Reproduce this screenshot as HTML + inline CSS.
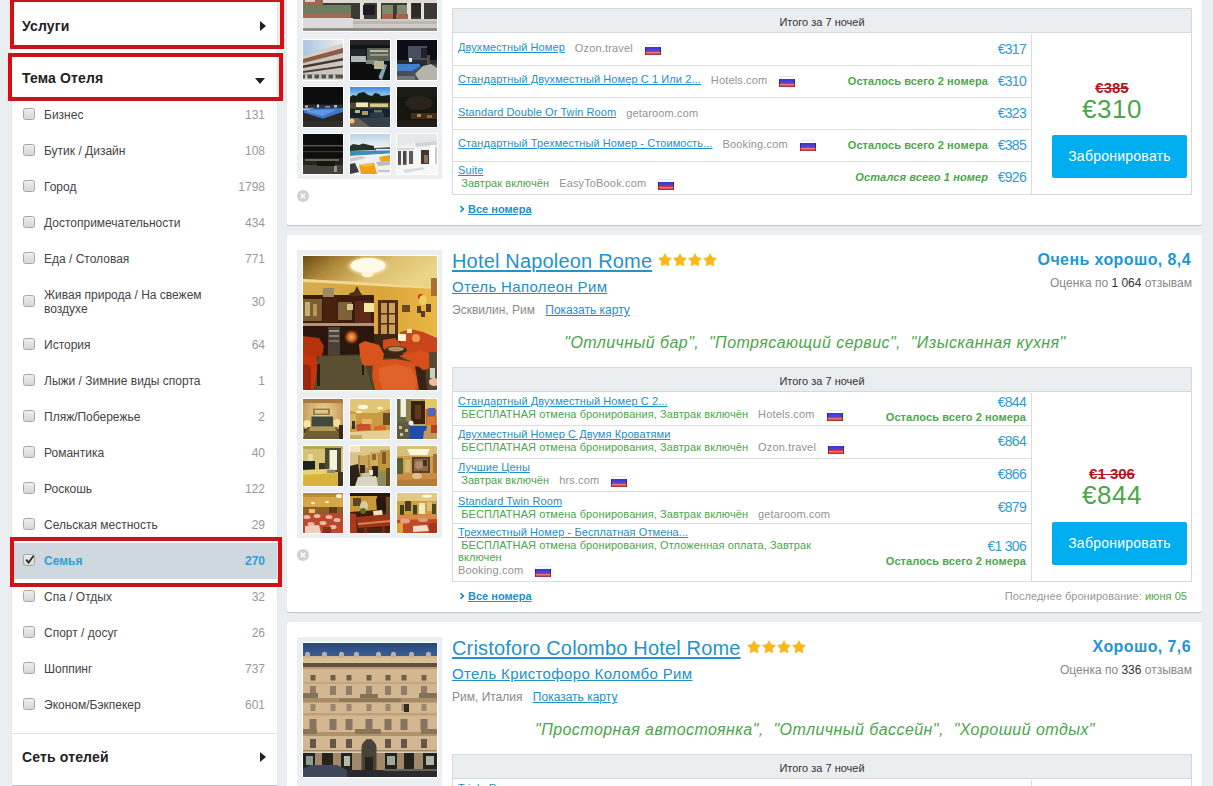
<!DOCTYPE html>
<html lang="ru"><head><meta charset="utf-8"><title>Отели</title>
<style>
*{box-sizing:border-box;margin:0;padding:0}
html,body{width:1213px;height:786px;overflow:hidden}
body{background:#ebeef1;font-family:"Liberation Sans",sans-serif;font-size:12px;color:#444;position:relative}
a{color:#2390c6;text-decoration:underline}
.abs{position:absolute}
#side{position:absolute;left:12px;top:0;width:265px;height:785px;background:#fff;box-shadow:0 1px 1px rgba(0,0,0,.18)}
.sh{position:absolute;left:10px;font-size:14px;font-weight:bold;color:#222;line-height:16px;white-space:nowrap;letter-spacing:.15px}
.row{position:absolute;left:0;width:265px;height:36px}
.row.sel{background:#cfd7df}
.cb{position:absolute;left:11px;top:11px;width:12px;height:12px;border:1px solid #a8a8a8;border-radius:2.5px;background:linear-gradient(#eeeeee,#d6d6d6)}
.row .t{position:absolute;left:32px;top:11px;line-height:14px;font-size:12px;color:#444;width:170px}
.row .n{position:absolute;right:12px;top:11px;line-height:14px;font-size:12px;color:#999;text-align:right}
.row.sel .t,.row.sel .n{color:#2ea0db;font-weight:bold}
.red{position:absolute;border:4px solid #e0090c;border-top-color:#c9151a;border-bottom-color:#c9151a}
.card{position:absolute;left:287px;width:915px;background:#fff;border-radius:2px;box-shadow:0 1px 1px rgba(0,0,0,.18)}
.panel{position:absolute;left:10px;top:15px;width:145px;height:288px;background:#ebeff2}
.img{position:absolute;overflow:hidden;box-shadow:0 0 0 1px #fff}
.img svg{display:block}
.x{position:absolute;left:10px;top:314px;width:12px;height:12px;border-radius:6px;background:#ccd1d5}
.title{position:absolute;left:165px;top:14px;font-size:20px;line-height:24px;white-space:nowrap}
.title a{letter-spacing:.18px;text-decoration-thickness:2px;text-underline-offset:2px;color:#2592cc}
.sub{position:absolute;left:165px;top:43px;font-size:15px;line-height:18px;white-space:nowrap;letter-spacing:.36px}
.loc{position:absolute;left:165px;top:68px;font-size:12px;line-height:14px;color:#8a8a8a;white-space:nowrap}
.loc a{margin-left:7px}
.q{position:absolute;left:165px;width:726px;top:98px;text-align:center;font-size:16px;line-height:20px;font-style:italic;color:#4ba64b;white-space:pre;letter-spacing:.45px}
.rate{position:absolute;right:11px;top:15px;font-size:16px;line-height:20px;font-weight:bold;color:#2196d3;white-space:nowrap;letter-spacing:.4px}
.rev{position:absolute;right:10px;top:41px;font-size:12px;line-height:14px;color:#888;white-space:nowrap}
.rev b{font-weight:normal;color:#333}
.tbl{position:absolute;left:165px;top:132px;width:740px;border:1px solid #d3d8dc;background:#fff}
.th{position:absolute;left:0;top:0;width:738px;height:24px;background:#ebeef1;border-bottom:1px solid #d3d8dc;text-align:center;font-size:11px;line-height:26px;color:#333}
.tr{position:absolute;left:0;width:578px;border-bottom:1px solid #d9dde0;font-size:11px;line-height:13px;letter-spacing:.09px}
.tr a{position:absolute;left:5px;white-space:nowrap}
.tr .g{color:#4ba64b}
.tr a.in{position:static}
.tr .pv{color:#929292;margin-left:10px;letter-spacing:.15px;position:relative;top:0}
.tr .one .pv{top:1px}
.tr .one .fl{vertical-align:-4px}
.tr .l2{position:absolute;left:5px;white-space:nowrap}
.fl{display:inline-block;width:16px;height:11px;margin-left:12px;vertical-align:-3px}
.pr{position:absolute;right:5px;font-size:14px;line-height:15px;color:#2f9ad2;white-space:nowrap;letter-spacing:-.7px}
.lf{position:absolute;right:5px;font-size:11px;line-height:13px;font-weight:bold;color:#4ba64b;white-space:nowrap;letter-spacing:.1px}
.rc{position:absolute;left:578px;top:25px;width:160px;border-left:1px solid #d9dde0}
.old{position:absolute;left:1px;width:158px;text-align:center;font-size:15px;line-height:16px;font-weight:bold;color:#b3151c;text-decoration:line-through}
.big{position:absolute;left:1px;width:158px;text-align:center;font-size:26px;line-height:28px;color:#4ba64b;letter-spacing:.5px}
.btn{position:absolute;left:20px;width:135px;height:43px;background:#00adee;border-radius:2px;color:#fff;font-size:14px;line-height:43px;text-align:center;letter-spacing:.25px}
.all{position:absolute;left:171px;font-size:11px;line-height:13px;font-weight:bold;white-space:nowrap}
.all:before{content:"";position:absolute;left:0px;top:3px;width:4px;height:4px;border-right:2px solid #2390c6;border-top:2px solid #2390c6;transform:rotate(45deg) scale(.8)}
.all a{margin-left:10px}
.last{position:absolute;right:15px;font-size:11px;line-height:13px;color:#999;white-space:nowrap;letter-spacing:.05px}
.last span{color:#4ba64b}
.stars{display:inline-block;vertical-align:1px;margin-left:6px;font-size:0}
.stars svg{margin-right:1px}
</style></head>
<body>
<div id="side">
<div class="sh" style="top:18px">Услуги</div>
<div class="abs" style="left:248px;top:21px;width:0;height:0;border-left:6px solid #222;border-top:5px solid transparent;border-bottom:5px solid transparent"></div>
<div class="sh" style="top:70px">Тема Отеля</div>
<div class="abs" style="left:243px;top:78px;width:0;height:0;border-top:6px solid #222;border-left:5px solid transparent;border-right:5px solid transparent"></div>
<div class="row" style="top:97px;height:36px"><span class="cb" style="top:11px"></span><span class="t">Бизнес</span><span class="n" style="top:11px">131</span></div>
<div class="row" style="top:133px;height:36px"><span class="cb" style="top:11px"></span><span class="t">Бутик / Дизайн</span><span class="n" style="top:11px">108</span></div>
<div class="row" style="top:169px;height:36px"><span class="cb" style="top:11px"></span><span class="t">Город</span><span class="n" style="top:11px">1798</span></div>
<div class="row" style="top:205px;height:36px"><span class="cb" style="top:11px"></span><span class="t">Достопримечательности</span><span class="n" style="top:11px">434</span></div>
<div class="row" style="top:241px;height:36px"><span class="cb" style="top:11px"></span><span class="t">Еда / Столовая</span><span class="n" style="top:11px">771</span></div>
<div class="row" style="top:277px;height:50px"><span class="cb" style="top:18px"></span><span class="t">Живая природа / На свежем воздухе</span><span class="n" style="top:18px">30</span></div>
<div class="row" style="top:327px;height:36px"><span class="cb" style="top:11px"></span><span class="t">История</span><span class="n" style="top:11px">64</span></div>
<div class="row" style="top:363px;height:36px"><span class="cb" style="top:11px"></span><span class="t">Лыжи / Зимние виды спорта</span><span class="n" style="top:11px">1</span></div>
<div class="row" style="top:399px;height:36px"><span class="cb" style="top:11px"></span><span class="t">Пляж/Побережье</span><span class="n" style="top:11px">2</span></div>
<div class="row" style="top:435px;height:36px"><span class="cb" style="top:11px"></span><span class="t">Романтика</span><span class="n" style="top:11px">40</span></div>
<div class="row" style="top:471px;height:36px"><span class="cb" style="top:11px"></span><span class="t">Роскошь</span><span class="n" style="top:11px">122</span></div>
<div class="row" style="top:507px;height:36px"><span class="cb" style="top:11px"></span><span class="t">Сельская местность</span><span class="n" style="top:11px">29</span></div>
<div class="row sel" style="top:543px;height:36px"><span class="cb" style="top:11px"><svg class="abs" style="left:0px;top:-1px" width="12" height="12" viewBox="0 0 12 12"><path d="M2.2 5.6 L4.6 8.6 L9.6 1.8" fill="none" stroke="#222" stroke-width="1.7"/></svg></span><span class="t">Семья</span><span class="n" style="top:11px">270</span></div>
<div class="row" style="top:579px;height:36px"><span class="cb" style="top:11px"></span><span class="t">Спа / Отдых</span><span class="n" style="top:11px">32</span></div>
<div class="row" style="top:615px;height:36px"><span class="cb" style="top:11px"></span><span class="t">Спорт / досуг</span><span class="n" style="top:11px">26</span></div>
<div class="row" style="top:651px;height:36px"><span class="cb" style="top:11px"></span><span class="t">Шоппинг</span><span class="n" style="top:11px">737</span></div>
<div class="row" style="top:687px;height:36px"><span class="cb" style="top:11px"></span><span class="t">Эконом/Бэкпекер</span><span class="n" style="top:11px">601</span></div>
<div class="abs" style="left:0;top:733px;width:265px;height:1px;background:#dfe3e6"></div>
<div class="sh" style="top:749px">Сеть отелей</div>
<div class="abs" style="left:248px;top:752px;width:0;height:0;border-left:6px solid #222;border-top:5px solid transparent;border-bottom:5px solid transparent"></div>
</div>
<div class="card" style="top:-124px;height:349px">
<div class="panel"></div>
<div class="img" style="left:16px;top:21px;width:134px;height:134px"><svg width="134" height="134" viewBox="0 0 134 134"><defs><filter id="g1" x="-5%" y="-5%" width="110%" height="110%"><feGaussianBlur stdDeviation="0.6"/></filter></defs><g filter="url(#g1)"><rect x="0" y="0" width="134" height="134" fill="#b8aea4"/><rect x="0" y="96" width="134" height="10" fill="#ded9d2"/><rect x="0" y="106" width="134" height="16" fill="#3c3a36"/><rect x="0" y="100" width="20" height="9" fill="#9a6a50"/><rect x="2" y="100" width="10" height="5" fill="#d8d0c4"/><rect x="0" y="108" width="48" height="8" fill="#6f7a5c"/><rect x="0" y="116" width="48" height="6" fill="#a06a56"/><rect x="57" y="105" width="4" height="20" fill="#e4e0da"/><rect x="74" y="105" width="4" height="20" fill="#e4e0da"/><rect x="104" y="105" width="4" height="20" fill="#e4e0da"/><rect x="118" y="105" width="3" height="20" fill="#e4e0da"/><rect x="79" y="108" width="11" height="9" fill="#7f8a68"/><rect x="94" y="108" width="10" height="9" fill="#7f8a68"/><rect x="79" y="117" width="11" height="6" fill="#a8644e"/><rect x="93" y="117" width="12" height="7" fill="#a8644e"/><rect x="60" y="108" width="12" height="10" fill="#1e1e20"/><rect x="109" y="106" width="9" height="14" fill="#2a2a2c"/><rect x="122" y="106" width="12" height="14" fill="#3a3836"/><rect x="0" y="122" width="134" height="12" fill="#cfcac6"/><rect x="0" y="121" width="50" height="11" fill="#dcdcdf"/><rect x="0" y="131" width="134" height="3" fill="#8f8c8a"/><rect x="50" y="124" width="84" height="3" fill="#bdb7b2"/></g></svg></div>
<div class="img" style="left:16px;top:164px;width:40px;height:40px"><svg width="40" height="40" viewBox="0 0 40 40"><defs><filter id="g3" x="-5%" y="-5%" width="110%" height="110%"><feGaussianBlur stdDeviation="0.4"/></filter></defs><g filter="url(#g3)"><defs><linearGradient id="g2" x1="0" y1="0" x2="1" y2="0"><stop offset="0" stop-color="#a9c6e4"/><stop offset="0.55" stop-color="#cfdde9"/><stop offset="1" stop-color="#eeeeea"/></linearGradient></defs><rect x="0" y="0" width="40" height="40" fill="#cfc6bb"/><polygon points="0,0 40,0 40,4 26,7 0,17" fill="url(#g2)"/><polygon points="0,17 26,7 40,4 40,8 0,21" fill="#d8d0c6"/><polygon points="0,19 40,8 40,13 0,23" fill="#8a5c48"/><polygon points="0,25.5 40,18 40,20.5 0,28" fill="#3f3933"/><polygon points="0,31 40,25.5 40,27.5 0,33" fill="#4a443e"/><rect x="0" y="34.5" width="40" height="4.5" fill="#55524e"/><rect x="2" y="34.5" width="2.5" height="4.5" fill="#c9c5c0"/><rect x="9" y="34.5" width="2.5" height="4.5" fill="#c9c5c0"/><rect x="16" y="34.5" width="2.5" height="4.5" fill="#c9c5c0"/><rect x="23" y="34.5" width="2.5" height="4.5" fill="#c9c5c0"/><rect x="30" y="34.5" width="2.5" height="4.5" fill="#c9c5c0"/><rect x="0" y="38.5" width="40" height="1.5" fill="#d8d6d2"/></g></svg></div>
<div class="img" style="left:63px;top:164px;width:40px;height:40px"><svg width="40" height="40" viewBox="0 0 40 40"><defs><filter id="g4" x="-5%" y="-5%" width="110%" height="110%"><feGaussianBlur stdDeviation="0.5"/></filter></defs><g filter="url(#g4)"><rect x="0" y="0" width="40" height="40" fill="#101216"/><rect x="0" y="0" width="40" height="5" fill="#2a2426"/><rect x="17" y="8" width="23" height="13" fill="#5d6358"/><rect x="20" y="10" width="18" height="2" fill="#b9b7a0"/><rect x="20" y="14" width="18" height="2" fill="#9a9880"/><rect x="0" y="9" width="16" height="7" fill="#24282a"/><rect x="1" y="16" width="15" height="6" fill="#aeb8b6"/><rect x="16" y="20" width="12" height="5" fill="#7c8478"/><polygon points="28,38 34,24 37,25 32,40" fill="#86a0b0"/><rect x="24" y="21" width="10" height="8" fill="#b8b49a"/><polygon points="0,24 22,24 30,40 0,40" fill="#0b0c10"/></g></svg></div>
<div class="img" style="left:110px;top:164px;width:40px;height:40px"><svg width="40" height="40" viewBox="0 0 40 40"><defs><filter id="g5" x="-5%" y="-5%" width="110%" height="110%"><feGaussianBlur stdDeviation="0.5"/></filter></defs><g filter="url(#g5)"><rect x="0" y="0" width="40" height="40" fill="#0d0e12"/><rect x="11" y="6" width="19" height="14" fill="#46505e"/><rect x="24" y="8" width="6" height="10" fill="#20242a"/><rect x="0" y="20" width="40" height="5" fill="#2a2e30"/><rect x="12" y="18" width="3" height="4" fill="#e0e4e0"/><rect x="30" y="15" width="3" height="9" fill="#50503c"/><polygon points="0,24 22,24 24,26 16,31 0,31" fill="#3c7fd0"/><polygon points="0,31 16,31 24,26 40,24 40,40 0,40" fill="#4a4e52"/><polygon points="18,34 26,26 34,24 40,28 40,40 22,40" fill="#b4b4ac"/><rect x="0" y="36" width="18" height="4" fill="#707478"/></g></svg></div>
<div class="img" style="left:16px;top:211px;width:40px;height:40px"><svg width="40" height="40" viewBox="0 0 40 40"><defs><filter id="g6" x="-5%" y="-5%" width="110%" height="110%"><feGaussianBlur stdDeviation="0.55"/></filter></defs><g filter="url(#g6)"><rect x="0" y="0" width="40" height="40" fill="#07080b"/><rect x="0" y="17.5" width="40" height="3.5" fill="#2c3036"/><rect x="2" y="18.5" width="3" height="2" fill="#c8ccd0"/><rect x="14" y="17.5" width="2" height="3" fill="#d8dce0"/><rect x="31" y="18" width="3" height="2.5" fill="#b8bcc0"/><rect x="22" y="19" width="5" height="1.5" fill="#8a9098"/><polygon points="0,21.5 40,21 40,25 20,32 1,26" fill="#3c76c6"/><polygon points="3,23 34,22.5 20,29 6,25.5" fill="#5e96de"/><polygon points="0,21.5 12,21.3 4,23 0,23" fill="#b8d0ec"/><polygon points="0,26 1,26 20,32 40,25 40,40 0,40" fill="#2b2723"/><rect x="0" y="34" width="40" height="6" fill="#332e29"/></g></svg></div>
<div class="img" style="left:63px;top:211px;width:40px;height:40px"><svg width="40" height="40" viewBox="0 0 40 40"><defs><filter id="g8" x="-5%" y="-5%" width="110%" height="110%"><feGaussianBlur stdDeviation="0.55"/></filter></defs><g filter="url(#g8)"><defs><linearGradient id="g7" x1="0" y1="0" x2="0" y2="1"><stop offset="0" stop-color="#3a8be0"/><stop offset="1" stop-color="#a4d0f0"/></linearGradient></defs><rect x="0" y="0" width="40" height="40" fill="#1b2834"/><rect x="0" y="0" width="40" height="10" fill="url(#g7)"/><polygon points="0,10 3,8 6,9 9,6 14,5 18,8 22,9 25,6 29,7 31,9 40,8 40,17 0,17" fill="#131a14"/><rect x="0" y="15.5" width="40" height="5.5" fill="#4f4a30"/><rect x="6" y="15.5" width="12" height="4.5" fill="#f2e6b4"/><rect x="20" y="16.5" width="18" height="3.5" fill="#d8c88c"/><rect x="0" y="21" width="40" height="1.2" fill="#2c3a44"/><rect x="0" y="22" width="40" height="9" fill="#16222e"/><rect x="5" y="23" width="5" height="3" fill="#c8b478"/><rect x="12" y="24" width="6" height="4" fill="#b09a60"/><rect x="24" y="23" width="8" height="2.5" fill="#6f6a50"/><rect x="20" y="26" width="14" height="4" fill="#243a52"/><polygon points="0,31 40,30 40,40 0,40" fill="#36414c"/><polygon points="0,31 8,31 20,40 0,40" fill="#6b635a"/><ellipse cx="2" cy="34" rx="2.5" ry="2.5" fill="#f0c078"/></g></svg></div>
<div class="img" style="left:110px;top:211px;width:40px;height:40px"><svg width="40" height="40" viewBox="0 0 40 40"><defs><filter id="g9" x="-5%" y="-5%" width="110%" height="110%"><feGaussianBlur stdDeviation="0.6"/></filter></defs><g filter="url(#g9)"><rect x="0" y="0" width="40" height="40" fill="#17130f"/><rect x="0" y="0" width="40" height="10" fill="#1f1a14"/><ellipse cx="22" cy="16" rx="14" ry="7" fill="#2a241a"/><rect x="14" y="26" width="26" height="6" fill="#3f2e1c"/><rect x="20" y="27" width="4" height="3" fill="#b08850"/><rect x="30" y="28" width="5" height="3" fill="#8a6a40"/><ellipse cx="18" cy="35" rx="2" ry="2" fill="#d8a868"/><rect x="0" y="33" width="40" height="7" fill="#231c16"/></g></svg></div>
<div class="img" style="left:16px;top:258px;width:40px;height:40px"><svg width="40" height="40" viewBox="0 0 40 40"><defs><filter id="g10" x="-5%" y="-5%" width="110%" height="110%"><feGaussianBlur stdDeviation="0.5"/></filter></defs><g filter="url(#g10)"><rect x="0" y="0" width="40" height="40" fill="#09090b"/><rect x="0" y="11" width="40" height="1.5" fill="#55534f"/><rect x="0" y="17" width="40" height="1.2" fill="#3a3834"/><rect x="0" y="24" width="40" height="8" fill="#25231f"/><rect x="2" y="25" width="34" height="2" fill="#6a6658"/><rect x="0" y="31" width="40" height="9" fill="#46423b"/><rect x="14" y="27" width="18" height="5" fill="#15130f"/><rect x="31" y="32" width="3" height="6" fill="#9a9484"/></g></svg></div>
<div class="img" style="left:63px;top:258px;width:40px;height:40px"><svg width="40" height="40" viewBox="0 0 40 40"><defs><filter id="g12" x="-5%" y="-5%" width="110%" height="110%"><feGaussianBlur stdDeviation="0.55"/></filter></defs><g filter="url(#g12)"><defs><linearGradient id="g11" x1="0" y1="0" x2="0" y2="1"><stop offset="0" stop-color="#b9d3e8"/><stop offset="1" stop-color="#eef3f5"/></linearGradient></defs><rect x="0" y="0" width="40" height="40" fill="#efefee"/><rect x="0" y="0" width="40" height="13" fill="url(#g11)"/><polygon points="0,12 3,10 9,11 13,9.5 19,11 24,12 24,16 0,17" fill="#26352a"/><polygon points="24,14 40,13 40,16.5 24,16.5" fill="#566068"/><rect x="26" y="15" width="14" height="2" fill="#e4e8e8"/><polygon points="0,17 40,16.5 40,19.5 0,22" fill="#3b8fb8"/><polygon points="0,22 40,19.5 40,40 0,40" fill="#f0f0ef"/><polygon points="0,24 12,22 16,24 0,28" fill="#c9ccd0"/><polygon points="0,30 5,29 9,38 0,40" fill="#3c3c3e"/><polygon points="9,31 24,29 27,40 11,40" fill="#f0a012"/><polygon points="12,30 22,29 23,32 12,33" fill="#f6bc4a"/><polygon points="29,23 40,21 40,27 31,28" fill="#efa51a"/><polygon points="26,28 40,27 40,31 28,32" fill="#b8bcc2"/><rect x="28" y="36" width="12" height="2" fill="#c4c8cc"/></g></svg></div>
<div class="img" style="left:110px;top:258px;width:40px;height:40px"><svg width="40" height="40" viewBox="0 0 40 40"><defs><filter id="g13" x="-5%" y="-5%" width="110%" height="110%"><feGaussianBlur stdDeviation="0.55"/></filter></defs><g filter="url(#g13)"><rect x="0" y="0" width="40" height="40" fill="#f1f1f1"/><polygon points="0,0 40,0 40,7 18,9 0,12" fill="#e6e7e8"/><polygon points="18,9 40,7 40,11 19,13" fill="#d2d4d6"/><rect x="0" y="14" width="18" height="2" fill="#d8dadc"/><rect x="1" y="17" width="3" height="14" fill="#55524e"/><rect x="6" y="17" width="3.5" height="14" fill="#4a4744"/><rect x="12" y="17" width="4" height="13" fill="#5e5a56"/><rect x="17" y="13" width="6" height="20" fill="#f6f6f6"/><rect x="24" y="16" width="8" height="14" fill="#3d3833"/><rect x="27" y="21" width="4" height="8" fill="#8f6f58"/><rect x="33" y="11" width="5" height="22" fill="#ffffff"/><rect x="38" y="13" width="2" height="20" fill="#c8cacc"/><polygon points="0,31 40,30 40,40 0,40" fill="#f7f7f7"/><polygon points="6,36 26,33 28,35 8,39" fill="#d9dbdd"/></g></svg></div>
<div class="x"><svg class="abs" style="left:0;top:0" width="12" height="12" viewBox="0 0 12 12"><path d="M3.8 3.8L8.2 8.2M8.2 3.8L3.8 8.2" stroke="#fff" stroke-width="1.6"/></svg></div>
<div class="tbl" style="height:187px">
<div class="th">Итого за 7 ночей</div>
<div class="tr" style="top:25px;height:32px"><span class="l2 one" style="top:7px"><a class="in">Двухместный Номер</a><span class="pv">Ozon.travel</span><svg class="fl" viewBox="0 0 16 11"><rect width="16" height="3" fill="#fbfbfe"/><rect y="0" width="16" height=".7" fill="#e2e3ee"/><rect y="3" width="16" height="2" fill="#3a3ed4"/><rect y="5" width="16" height="2" fill="#5b3ec4"/><rect y="7" width="16" height="1.5" fill="#d23650"/><rect y="8.5" width="16" height="1.7" fill="#f04a4a"/><rect y="10.2" width="16" height=".8" fill="#8c1616"/><rect x="0" y="3" width=".8" height="4" fill="#1b0f7a" opacity=".8"/><rect x="15.2" y="3" width=".8" height="4" fill="#1b0f7a" opacity=".8"/><rect x="0" y="7" width=".8" height="4" fill="#7a1018" opacity=".8"/><rect x="15.2" y="7" width=".8" height="4" fill="#7a1018" opacity=".8"/></svg></span><span class="pr" style="top:8px">€317</span></div>
<div class="tr" style="top:57px;height:32px"><span class="l2 one" style="top:7px"><a class="in">Стандартный Двухместный Номер С 1 Или 2...</a><span class="pv">Hotels.com</span><svg class="fl" viewBox="0 0 16 11"><rect width="16" height="3" fill="#fbfbfe"/><rect y="0" width="16" height=".7" fill="#e2e3ee"/><rect y="3" width="16" height="2" fill="#3a3ed4"/><rect y="5" width="16" height="2" fill="#5b3ec4"/><rect y="7" width="16" height="1.5" fill="#d23650"/><rect y="8.5" width="16" height="1.7" fill="#f04a4a"/><rect y="10.2" width="16" height=".8" fill="#8c1616"/><rect x="0" y="3" width=".8" height="4" fill="#1b0f7a" opacity=".8"/><rect x="15.2" y="3" width=".8" height="4" fill="#1b0f7a" opacity=".8"/><rect x="0" y="7" width=".8" height="4" fill="#7a1018" opacity=".8"/><rect x="15.2" y="7" width=".8" height="4" fill="#7a1018" opacity=".8"/></svg></span><span class="pr" style="top:8px">€310</span><span class="lf" style="top:9px;right:43px">Осталось всего 2 номера</span></div>
<div class="tr" style="top:89px;height:32px"><span class="l2 one" style="top:8px"><a class="in">Standard Double Or Twin Room</a><span class="pv">getaroom.com</span></span><span class="pr" style="top:8px">€323</span></div>
<div class="tr" style="top:121px;height:32px"><span class="l2 one" style="top:7px"><a class="in">Стандартный Трехместный Номер - Стоимость...</a><span class="pv">Booking.com</span><svg class="fl" viewBox="0 0 16 11"><rect width="16" height="3" fill="#fbfbfe"/><rect y="0" width="16" height=".7" fill="#e2e3ee"/><rect y="3" width="16" height="2" fill="#3a3ed4"/><rect y="5" width="16" height="2" fill="#5b3ec4"/><rect y="7" width="16" height="1.5" fill="#d23650"/><rect y="8.5" width="16" height="1.7" fill="#f04a4a"/><rect y="10.2" width="16" height=".8" fill="#8c1616"/><rect x="0" y="3" width=".8" height="4" fill="#1b0f7a" opacity=".8"/><rect x="15.2" y="3" width=".8" height="4" fill="#1b0f7a" opacity=".8"/><rect x="0" y="7" width=".8" height="4" fill="#7a1018" opacity=".8"/><rect x="15.2" y="7" width=".8" height="4" fill="#7a1018" opacity=".8"/></svg></span><span class="pr" style="top:8px">€385</span><span class="lf" style="top:9px;right:43px">Осталось всего 2 номера</span></div>
<div class="tr" style="top:153px;height:33px"><a style="top:2px">Suite</a><span class="l2" style="top:15px"><span class="g">&nbsp;Завтрак включён</span><span class="pv">EasyToBook.com</span><svg class="fl" viewBox="0 0 16 11"><rect width="16" height="3" fill="#fbfbfe"/><rect y="0" width="16" height=".7" fill="#e2e3ee"/><rect y="3" width="16" height="2" fill="#3a3ed4"/><rect y="5" width="16" height="2" fill="#5b3ec4"/><rect y="7" width="16" height="1.5" fill="#d23650"/><rect y="8.5" width="16" height="1.7" fill="#f04a4a"/><rect y="10.2" width="16" height=".8" fill="#8c1616"/><rect x="0" y="3" width=".8" height="4" fill="#1b0f7a" opacity=".8"/><rect x="15.2" y="3" width=".8" height="4" fill="#1b0f7a" opacity=".8"/><rect x="0" y="7" width=".8" height="4" fill="#7a1018" opacity=".8"/><rect x="15.2" y="7" width=".8" height="4" fill="#7a1018" opacity=".8"/></svg></span><span class="pr" style="top:8px">€926</span><span class="lf" style="top:9px;right:43px;font-style:italic">Остался всего 1 номер</span></div>
<div class="rc" style="height:160px"><div class="old" style="top:46px">€385</div><div class="big" style="top:61px">€310</div><div class="btn" style="top:101px">Забронировать</div></div>
</div>
<div class="all" style="top:327px"><a>Все номера</a></div>
</div>
<div class="card" style="top:235px;height:377px">
<div class="panel"></div>
<div class="img" style="left:16px;top:21px;width:134px;height:134px"><svg width="134" height="134" viewBox="0 0 134 134"><defs><filter id="g18" x="-5%" y="-5%" width="110%" height="110%"><feGaussianBlur stdDeviation="0.7"/></filter></defs><g filter="url(#g18)"><defs><linearGradient id="g14" x1="0" y1="0" x2="1" y2="0.3"><stop offset="0" stop-color="#6a4a18"/><stop offset="0.3" stop-color="#b08a3c"/><stop offset="0.65" stop-color="#dcc070"/><stop offset="1" stop-color="#ead488"/></linearGradient><linearGradient id="g15" x1="0" y1="0" x2="1" y2="0"><stop offset="0" stop-color="#d6ac4c"/><stop offset="0.6" stop-color="#dba53a"/><stop offset="1" stop-color="#e9b845"/></linearGradient><radialGradient id="g16" cx="0.5" cy="0.5" r="0.5"><stop offset="0" stop-color="#fffdf0" stop-opacity="1"/><stop offset="0.6" stop-color="#fff0c0" stop-opacity="1"/><stop offset="1" stop-color="#f0d080" stop-opacity="0"/></radialGradient><radialGradient id="g17" cx="0.5" cy="0.5" r="0.5"><stop offset="0" stop-color="#ffb060" stop-opacity="1"/><stop offset="0.5" stop-color="#e07028" stop-opacity="0.9"/><stop offset="1" stop-color="#803010" stop-opacity="0"/></radialGradient></defs><rect x="0" y="0" width="134" height="134" fill="url(#g15)"/><polygon points="0,0 134,0 134,30 90,28 40,25 0,23" fill="url(#g14)"/><polygon points="0,23 40,25 90,28 134,30 134,33 90,31 40,28 0,26" fill="#f0d890"/><ellipse cx="65" cy="10" rx="23" ry="11" fill="url(#g16)"/><ellipse cx="65" cy="9.5" rx="17.5" ry="7.5" fill="#fffbe8"/><ellipse cx="64.5" cy="18.5" rx="6" ry="3" fill="#fff6d8"/><rect x="0" y="39" width="71" height="30" fill="#3b1b0c"/><rect x="0" y="43" width="19" height="22" fill="#7a5c34"/><rect x="2" y="46" width="5" height="14" fill="#c8b070"/><rect x="10" y="48" width="4" height="12" fill="#b89858"/><rect x="20" y="42" width="14" height="24" fill="#4a2210"/><rect x="35" y="46" width="14" height="18" fill="#806038"/><rect x="44" y="48" width="6" height="6" fill="#d8c890"/><rect x="52" y="45" width="16" height="22" fill="#5a2c14"/><rect x="61" y="47" width="10" height="9" fill="#f6e6a0"/><rect x="20" y="32" width="11" height="9" fill="#9a8a68"/><polygon points="45,40 60,40 57,36 54,30 51,36 47,37" fill="#4a3018"/><rect x="0" y="67" width="71" height="3" fill="#b49274"/><rect x="0" y="70" width="71" height="32" fill="#29130b"/><ellipse cx="48.5" cy="81" rx="8" ry="8" fill="url(#g17)"/><rect x="25" y="71" width="12" height="28" fill="#4a4038"/><rect x="26" y="74" width="10" height="2" fill="#9a8e80"/><rect x="26" y="79" width="10" height="2" fill="#8a7e70"/><rect x="26" y="84" width="10" height="2" fill="#7a6e60"/><rect x="75" y="44" width="20" height="37" fill="#5a2a10"/><rect x="78" y="47" width="6" height="31" fill="#c09a58"/><rect x="86" y="47" width="6" height="31" fill="#c8a260"/><rect x="78" y="57" width="14" height="1.5" fill="#5a2a10"/><rect x="78" y="67" width="14" height="1.5" fill="#5a2a10"/><rect x="99" y="49" width="8" height="7" fill="#6a4a2a"/><rect x="114" y="50" width="4" height="7" fill="#5a3a20"/><rect x="123" y="48" width="5" height="8" fill="#5a3a20"/><rect x="118" y="55" width="4" height="6" fill="#5a3a20"/><ellipse cx="118" cy="41" rx="3" ry="3" fill="#d82a18"/><ellipse cx="120" cy="44" rx="4" ry="5" fill="#f0d060"/><rect x="128" y="22" width="6" height="18" fill="#a8702c"/><polygon points="0,100 71,98 134,100 134,134 0,134" fill="#4c4325"/><polygon points="16,100 60,100 70,134 12,134" fill="#5a5030"/><rect x="71" y="78" width="30" height="24" fill="#3a2614"/><polygon points="0,80 16,82 21,90 19,100 0,102" fill="#b6300f"/><polygon points="0,98 13,100 15,108 11,134 0,134" fill="#c4340f"/><polygon points="0,108 8,110 8,134 0,134" fill="#9e260c"/><rect x="14" y="108" width="3" height="22" fill="#2a1a10"/><polygon points="56,88 62,85 76,89 81,98 79,109 60,110 57,100" fill="#d9521c"/><rect x="59" y="109" width="2" height="10" fill="#2a1a10"/><rect x="77" y="108" width="2" height="9" fill="#2a1a10"/><polygon points="97,76 108,73 120,76 134,82 134,104 112,106 98,96" fill="#c9451a"/><ellipse cx="113" cy="82" rx="4" ry="4" fill="#f09a50"/><polygon points="80,84 92,82 98,88 96,96 84,96 80,92" fill="#d24c1a"/><ellipse cx="93" cy="94" rx="11" ry="4" fill="#3b2a1a"/><ellipse cx="93" cy="93" rx="8" ry="2.5" fill="#a89060"/><rect x="95" y="78" width="8" height="7" fill="#fff4d0"/><rect x="104" y="73" width="5" height="4" fill="#ffe8b0"/><polygon points="70,108 76,104 92,103 110,106 120,112 122,134 72,134 69,120" fill="#d6521c"/><polygon points="76,112 92,108 108,112 114,124 112,134 80,134 76,124" fill="#e06226"/><polygon points="112,110 122,112 124,134 116,134" fill="#3a2414"/><polygon points="96,100 118,94 128,98 128,112 120,114 110,106" fill="#d8501c"/><rect x="126" y="96" width="8" height="38" fill="#5a4a30"/><rect x="127" y="112" width="5" height="10" fill="#c8d0c0"/><ellipse cx="131" cy="126" rx="5" ry="4" fill="#e8c0a0"/></g></svg></div>
<div class="img" style="left:16px;top:164px;width:40px;height:40px"><svg width="40" height="40" viewBox="0 0 40 40"><defs><filter id="g20" x="-5%" y="-5%" width="110%" height="110%"><feGaussianBlur stdDeviation="0.5"/></filter></defs><g filter="url(#g20)"><defs><radialGradient id="g19" cx="0.5" cy="0.35" r="0.6"><stop offset="0" stop-color="#f0d8a0" stop-opacity="1"/><stop offset="1" stop-color="#c0924e" stop-opacity="1"/></radialGradient></defs><rect x="0" y="0" width="40" height="40" fill="url(#g19)"/><rect x="0" y="0" width="40" height="4" fill="#a87a40"/><rect x="10" y="9.5" width="17" height="6.5" fill="#9a7a40"/><rect x="12" y="11" width="13" height="3.5" fill="#d8c890"/><rect x="8.5" y="17.5" width="21.5" height="10" fill="#3f4a3a"/><ellipse cx="4" cy="25" rx="3.5" ry="4" fill="#fbe6a8"/><ellipse cx="34" cy="24" rx="3.5" ry="4" fill="#f6dc98"/><rect x="1" y="30" width="8" height="4" fill="#4a2c18"/><rect x="31" y="30" width="8" height="4" fill="#4a2c18"/><polygon points="4,28 34,28 38,40 0,40" fill="#6f5e32"/><polygon points="7,28 32,28 33,32 6,32" fill="#b09a58"/><rect x="36" y="26" width="4" height="14" fill="#3a2816"/></g></svg></div>
<div class="img" style="left:63px;top:164px;width:40px;height:40px"><svg width="40" height="40" viewBox="0 0 40 40"><defs><filter id="g21" x="-5%" y="-5%" width="110%" height="110%"><feGaussianBlur stdDeviation="0.55"/></filter></defs><g filter="url(#g21)"><rect x="0" y="0" width="40" height="40" fill="#c99b42"/><polygon points="0,0 40,0 40,10 26,14 10,14 0,12" fill="#e2c474"/><ellipse cx="13" cy="8" rx="5" ry="2.2" fill="#fffbe0"/><ellipse cx="9" cy="13" rx="3" ry="1.3" fill="#fff4c8"/><ellipse cx="30" cy="9" rx="3" ry="1.3" fill="#fff4c8"/><rect x="33" y="14" width="7" height="12" fill="#6c4a20"/><rect x="0" y="15" width="6" height="12" fill="#d8b868"/><rect x="2" y="22" width="3" height="8" fill="#3a3020"/><polygon points="6,26 12,24 20,25 21,31 7,32" fill="#c8502a"/><polygon points="24,28 30,26 36,27 36,32 24,32" fill="#dc6a2e"/><rect x="12" y="20" width="10" height="5" fill="#e0b868"/><polygon points="0,33 40,31 40,40 0,40" fill="#e6cf92"/><rect x="0" y="36" width="12" height="4" fill="#c8a868"/></g></svg></div>
<div class="img" style="left:110px;top:164px;width:40px;height:40px"><svg width="40" height="40" viewBox="0 0 40 40"><defs><filter id="g22" x="-5%" y="-5%" width="110%" height="110%"><feGaussianBlur stdDeviation="0.5"/></filter></defs><g filter="url(#g22)"><rect x="0" y="0" width="40" height="40" fill="#b8a055"/><rect x="0" y="0" width="9" height="26" fill="#66683e"/><rect x="3.5" y="0" width="6" height="18" fill="#f2efe0"/><rect x="9" y="0" width="5" height="24" fill="#8a8250"/><rect x="14" y="2" width="14" height="23" fill="#3a200f"/><rect x="18" y="6" width="6" height="14" fill="#5e3a1e"/><rect x="28" y="0" width="12" height="10" fill="#e6c860"/><rect x="29" y="10" width="10" height="16" fill="#c8602a"/><rect x="31" y="9" width="7" height="8" fill="#4a66c8"/><rect x="30" y="18" width="8" height="8" fill="#d87a30"/><polygon points="0,24 12,22 15,28 13,40 0,40" fill="#5b5a46"/><rect x="2" y="27" width="3" height="3" fill="#c8c4a0"/><rect x="8" y="30" width="3" height="3" fill="#c8c4a0"/><rect x="3" y="34" width="3" height="3" fill="#c8c4a0"/><ellipse cx="14" cy="24" rx="2.5" ry="2.5" fill="#f0f0e8"/><polygon points="13,27 30,27 27,40 12,40" fill="#1f4fa8"/><polygon points="27,32 40,30 40,40 26,40" fill="#c09a5a"/><rect x="34" y="26" width="6" height="8" fill="#b0421c"/></g></svg></div>
<div class="img" style="left:16px;top:211px;width:40px;height:40px"><svg width="40" height="40" viewBox="0 0 40 40"><defs><filter id="g23" x="-5%" y="-5%" width="110%" height="110%"><feGaussianBlur stdDeviation="0.5"/></filter></defs><g filter="url(#g23)"><rect x="0" y="0" width="40" height="40" fill="#d6c174"/><rect x="0" y="0" width="40" height="3" fill="#bda65a"/><rect x="22" y="2" width="16" height="24" fill="#4b4c30"/><rect x="26.5" y="4" width="7.5" height="20" fill="#f6f2dc"/><rect x="5" y="8" width="5" height="8" fill="#e8dca0"/><rect x="0" y="15" width="12" height="9" fill="#1f241c"/><rect x="16" y="17" width="6" height="7" fill="#3a3424"/><polygon points="0,24 30,23 35,28 35,40 0,40" fill="#d7b53e"/><polygon points="0,24 30,23 33,27 0,29" fill="#ead376"/><rect x="35" y="26" width="5" height="14" fill="#3a3020"/><rect x="24" y="24" width="8" height="3" fill="#8a8a70"/></g></svg></div>
<div class="img" style="left:63px;top:211px;width:40px;height:40px"><svg width="40" height="40" viewBox="0 0 40 40"><defs><filter id="g24" x="-5%" y="-5%" width="110%" height="110%"><feGaussianBlur stdDeviation="0.5"/></filter></defs><g filter="url(#g24)"><rect x="0" y="0" width="40" height="40" fill="#b58d45"/><polygon points="0,0 40,0 40,4 14,10 0,8" fill="#dcc68a"/><rect x="0" y="0" width="10" height="6" fill="#f0e6c0"/><rect x="0" y="8" width="8" height="12" fill="#d8c48a"/><rect x="10" y="10" width="8" height="12" fill="#c8a458"/><rect x="20" y="6" width="8" height="14" fill="#d2ac5c"/><rect x="22" y="8" width="4" height="6" fill="#8a6a38"/><rect x="30" y="4" width="10" height="20" fill="#c0963e"/><rect x="32" y="6" width="4" height="12" fill="#7a5a2a"/><polygon points="0,20 8,18 10,30 6,40 0,40" fill="#2a2418"/><rect x="10" y="19" width="5" height="8" fill="#2e261a"/><rect x="22" y="20" width="6" height="11" fill="#2a2218"/><rect x="19" y="24" width="4" height="5" fill="#e8e4d0"/><polygon points="8,31 26,30 28,40 5,40" fill="#d8d5c2"/><polygon points="28,26 36,25 36,40 28,40" fill="#8c8c5c"/><rect x="36" y="22" width="4" height="18" fill="#6a4a22"/><rect x="12" y="27" width="8" height="4" fill="#c9c5ae"/></g></svg></div>
<div class="img" style="left:110px;top:211px;width:40px;height:40px"><svg width="40" height="40" viewBox="0 0 40 40"><defs><filter id="g25" x="-5%" y="-5%" width="110%" height="110%"><feGaussianBlur stdDeviation="0.55"/></filter></defs><g filter="url(#g25)"><rect x="0" y="0" width="40" height="40" fill="#c8a052"/><rect x="0" y="0" width="40" height="10" fill="#d9be7a"/><polygon points="10,3 33,3 30,9 13,9" fill="#fbf8da"/><rect x="0" y="12" width="6" height="16" fill="#5d5c30"/><rect x="8" y="14" width="5" height="12" fill="#d8b86a"/><rect x="15" y="11" width="18" height="16" fill="#5a4028"/><rect x="17" y="13" width="14" height="12" fill="#8a6a48"/><ellipse cx="22" cy="19" rx="4" ry="4" fill="#b08a68"/><rect x="26" y="14" width="4" height="6" fill="#3a3428"/><rect x="36" y="8" width="4" height="26" fill="#a87232"/><polygon points="0,28 40,27 40,40 0,40" fill="#c98c42"/><ellipse cx="20" cy="30" rx="5" ry="3" fill="#e0c090"/><polygon points="0,34 40,33 40,40 0,40" fill="#b97a34"/></g></svg></div>
<div class="img" style="left:16px;top:258px;width:40px;height:40px"><svg width="40" height="40" viewBox="0 0 40 40"><defs><filter id="g26" x="-5%" y="-5%" width="110%" height="110%"><feGaussianBlur stdDeviation="0.55"/></filter></defs><g filter="url(#g26)"><rect x="0" y="0" width="40" height="40" fill="#c2562e"/><rect x="0" y="0" width="40" height="15" fill="#d6a646"/><rect x="0" y="0" width="40" height="4" fill="#c08a34"/><ellipse cx="36" cy="3" rx="3" ry="2" fill="#fff8e0"/><ellipse cx="10" cy="10" rx="2" ry="1.2" fill="#fff0c0"/><ellipse cx="24" cy="9" rx="2" ry="1.2" fill="#fff0c0"/><rect x="0" y="14" width="40" height="7" fill="#8f5d2a"/><rect x="26" y="14" width="8" height="6" fill="#5a3a1c"/><rect x="6" y="16" width="6" height="4" fill="#e8c070"/><polygon points="0,21 40,20 40,40 0,40" fill="#b9482a"/><ellipse cx="4" cy="24" rx="3.5" ry="2" fill="#ecb8a6"/><ellipse cx="14" cy="23" rx="3.5" ry="2" fill="#ecb8a6"/><ellipse cx="26" cy="24" rx="3.5" ry="2" fill="#ecb8a6"/><ellipse cx="34" cy="27" rx="3.5" ry="2" fill="#ecb8a6"/><ellipse cx="8" cy="31" rx="3.5" ry="2" fill="#ecb8a6"/><ellipse cx="20" cy="30" rx="3.5" ry="2" fill="#ecb8a6"/><ellipse cx="30" cy="34" rx="3.5" ry="2" fill="#ecb8a6"/><polygon points="2,33 16,32 18,40 2,40" fill="#f0cdb8"/><rect x="20" y="34" width="8" height="6" fill="#8a2e1c"/></g></svg></div>
<div class="img" style="left:63px;top:258px;width:40px;height:40px"><svg width="40" height="40" viewBox="0 0 40 40"><defs><filter id="g27" x="-5%" y="-5%" width="110%" height="110%"><feGaussianBlur stdDeviation="0.55"/></filter></defs><g filter="url(#g27)"><rect x="0" y="0" width="40" height="40" fill="#3a1d0e"/><rect x="0" y="0" width="40" height="3" fill="#2a1408"/><polygon points="0,3 27,3 27,17 0,19" fill="#c7993b"/><rect x="3" y="5" width="8" height="8" fill="#5a4426"/><ellipse cx="14" cy="13" rx="4" ry="5" fill="#d9cba0"/><ellipse cx="13" cy="18" rx="3" ry="3" fill="#5e6230"/><polygon points="26,6 30,3 35,6 37,18 27,19" fill="#261509"/><rect x="36" y="4" width="4" height="18" fill="#6a4a22"/><polygon points="23,18 32,17 33,24 24,25" fill="#f1e2c2"/><polygon points="6,24 40,21 40,33 8,35" fill="#9b3518"/><polygon points="8,30 40,27 40,29 8,32" fill="#d8805a"/><polygon points="0,20 6,21 7,40 0,40" fill="#a83a1a"/><rect x="7" y="35" width="33" height="5" fill="#4b200e"/><rect x="14" y="34" width="3" height="6" fill="#7a2a12"/><rect x="32" y="33" width="3" height="7" fill="#7a2a12"/></g></svg></div>
<div class="img" style="left:110px;top:258px;width:40px;height:40px"><svg width="40" height="40" viewBox="0 0 40 40"><defs><filter id="g28" x="-5%" y="-5%" width="110%" height="110%"><feGaussianBlur stdDeviation="0.55"/></filter></defs><g filter="url(#g28)"><rect x="0" y="0" width="40" height="40" fill="#cfa042"/><rect x="0" y="0" width="40" height="8" fill="#e2ca84"/><ellipse cx="30" cy="3" rx="5" ry="1.5" fill="#fffbe0"/><rect x="8" y="8" width="6" height="10" fill="#4a3a24"/><rect x="22" y="10" width="6" height="11" fill="#f2eac6"/><rect x="30" y="9" width="5" height="9" fill="#e0c070"/><rect x="3" y="12" width="4" height="10" fill="#39401f"/><rect x="16" y="12" width="4" height="10" fill="#39401f"/><rect x="35" y="11" width="4" height="10" fill="#4a4a24"/><polygon points="0,22 40,21 40,40 0,40" fill="#bf4a28"/><polygon points="0,22 40,21 40,26 0,27" fill="#d98a4a"/><ellipse cx="8" cy="28" rx="5" ry="2.5" fill="#e8a080"/><ellipse cx="26" cy="27" rx="5" ry="2" fill="#e09a78"/><polygon points="16,33 30,32 32,38 16,39" fill="#f2dcce"/><rect x="0" y="30" width="6" height="10" fill="#e0a030"/><rect x="32" y="30" width="8" height="10" fill="#a8381c"/></g></svg></div>
<div class="x"><svg class="abs" style="left:0;top:0" width="12" height="12" viewBox="0 0 12 12"><path d="M3.8 3.8L8.2 8.2M8.2 3.8L3.8 8.2" stroke="#fff" stroke-width="1.6"/></svg></div>
<div class="title"><a>Hotel Napoleon Rome</a><span class="stars"><svg width="14" height="14" viewBox="0 0 24 24"><polygon fill="#fab818" stroke="#fab818" stroke-width="1.2" stroke-linejoin="round" points="12.0,1.2 15.5,7.9 23.0,9.2 17.7,14.7 18.8,22.2 12.0,18.8 5.2,22.2 6.3,14.7 1.0,9.2 8.5,7.9"/></svg><svg width="14" height="14" viewBox="0 0 24 24"><polygon fill="#fab818" stroke="#fab818" stroke-width="1.2" stroke-linejoin="round" points="12.0,1.2 15.5,7.9 23.0,9.2 17.7,14.7 18.8,22.2 12.0,18.8 5.2,22.2 6.3,14.7 1.0,9.2 8.5,7.9"/></svg><svg width="14" height="14" viewBox="0 0 24 24"><polygon fill="#fab818" stroke="#fab818" stroke-width="1.2" stroke-linejoin="round" points="12.0,1.2 15.5,7.9 23.0,9.2 17.7,14.7 18.8,22.2 12.0,18.8 5.2,22.2 6.3,14.7 1.0,9.2 8.5,7.9"/></svg><svg width="14" height="14" viewBox="0 0 24 24"><polygon fill="#fab818" stroke="#fab818" stroke-width="1.2" stroke-linejoin="round" points="12.0,1.2 15.5,7.9 23.0,9.2 17.7,14.7 18.8,22.2 12.0,18.8 5.2,22.2 6.3,14.7 1.0,9.2 8.5,7.9"/></svg></span></div>
<div class="sub"><a>Отель Наполеон Рим</a></div>
<div class="loc">Эсквилин, Рим <a>Показать карту</a></div>
<div class="q">"Отличный бар",  "Потрясающий сервис",  "Изысканная кухня"</div>
<div class="rate">Очень хорошо, 8,4</div>
<div class="rev">Оценка по <b>1 064</b> отзывам</div>
<div class="tbl" style="height:215px">
<div class="th">Итого за 7 ночей</div>
<div class="tr" style="top:25px;height:33px"><a style="top:2px">Стандартный Двухместный Номер С 2...</a><span class="l2" style="top:15px"><span class="g">&nbsp;БЕСПЛАТНАЯ отмена бронирования, Завтрак включён</span><span class="pv">Hotels.com</span><svg class="fl" viewBox="0 0 16 11"><rect width="16" height="3" fill="#fbfbfe"/><rect y="0" width="16" height=".7" fill="#e2e3ee"/><rect y="3" width="16" height="2" fill="#3a3ed4"/><rect y="5" width="16" height="2" fill="#5b3ec4"/><rect y="7" width="16" height="1.5" fill="#d23650"/><rect y="8.5" width="16" height="1.7" fill="#f04a4a"/><rect y="10.2" width="16" height=".8" fill="#8c1616"/><rect x="0" y="3" width=".8" height="4" fill="#1b0f7a" opacity=".8"/><rect x="15.2" y="3" width=".8" height="4" fill="#1b0f7a" opacity=".8"/><rect x="0" y="7" width=".8" height="4" fill="#7a1018" opacity=".8"/><rect x="15.2" y="7" width=".8" height="4" fill="#7a1018" opacity=".8"/></svg></span><span class="pr" style="top:2px">€844</span><span class="lf" style="top:18px">Осталось всего 2 номера</span></div>
<div class="tr" style="top:58px;height:33px"><a style="top:2px">Двухместный Номер С Двумя Кроватями</a><span class="l2" style="top:15px"><span class="g">&nbsp;БЕСПЛАТНАЯ отмена бронирования, Завтрак включён</span><span class="pv">Ozon.travel</span><svg class="fl" viewBox="0 0 16 11"><rect width="16" height="3" fill="#fbfbfe"/><rect y="0" width="16" height=".7" fill="#e2e3ee"/><rect y="3" width="16" height="2" fill="#3a3ed4"/><rect y="5" width="16" height="2" fill="#5b3ec4"/><rect y="7" width="16" height="1.5" fill="#d23650"/><rect y="8.5" width="16" height="1.7" fill="#f04a4a"/><rect y="10.2" width="16" height=".8" fill="#8c1616"/><rect x="0" y="3" width=".8" height="4" fill="#1b0f7a" opacity=".8"/><rect x="15.2" y="3" width=".8" height="4" fill="#1b0f7a" opacity=".8"/><rect x="0" y="7" width=".8" height="4" fill="#7a1018" opacity=".8"/><rect x="15.2" y="7" width=".8" height="4" fill="#7a1018" opacity=".8"/></svg></span><span class="pr" style="top:8px">€864</span></div>
<div class="tr" style="top:91px;height:33px"><a style="top:2px">Лучшие Цены</a><span class="l2" style="top:15px"><span class="g">&nbsp;Завтрак включён</span><span class="pv">hrs.com</span><svg class="fl" viewBox="0 0 16 11"><rect width="16" height="3" fill="#fbfbfe"/><rect y="0" width="16" height=".7" fill="#e2e3ee"/><rect y="3" width="16" height="2" fill="#3a3ed4"/><rect y="5" width="16" height="2" fill="#5b3ec4"/><rect y="7" width="16" height="1.5" fill="#d23650"/><rect y="8.5" width="16" height="1.7" fill="#f04a4a"/><rect y="10.2" width="16" height=".8" fill="#8c1616"/><rect x="0" y="3" width=".8" height="4" fill="#1b0f7a" opacity=".8"/><rect x="15.2" y="3" width=".8" height="4" fill="#1b0f7a" opacity=".8"/><rect x="0" y="7" width=".8" height="4" fill="#7a1018" opacity=".8"/><rect x="15.2" y="7" width=".8" height="4" fill="#7a1018" opacity=".8"/></svg></span><span class="pr" style="top:8px">€866</span></div>
<div class="tr" style="top:124px;height:32px"><a style="top:3px">Standard Twin Room</a><span class="l2" style="top:16px"><span class="g">&nbsp;БЕСПЛАТНАЯ отмена бронирования, Завтрак включён</span><span class="pv">getaroom.com</span></span><span class="pr" style="top:8px">€879</span></div>
<div class="tr" style="top:156px;height:58px"><a style="top:2px">Трехместный Номер - Бесплатная Отмена...</a><span class="l2 g" style="top:15px">&nbsp;БЕСПЛАТНАЯ отмена бронирования, Отложенная оплата, Завтрак</span><span class="l2 g" style="top:27px">включен</span><span class="l2" style="top:40px"><span class="pv" style="margin-left:0px">Booking.com</span><svg class="fl" viewBox="0 0 16 11"><rect width="16" height="3" fill="#fbfbfe"/><rect y="0" width="16" height=".7" fill="#e2e3ee"/><rect y="3" width="16" height="2" fill="#3a3ed4"/><rect y="5" width="16" height="2" fill="#5b3ec4"/><rect y="7" width="16" height="1.5" fill="#d23650"/><rect y="8.5" width="16" height="1.7" fill="#f04a4a"/><rect y="10.2" width="16" height=".8" fill="#8c1616"/><rect x="0" y="3" width=".8" height="4" fill="#1b0f7a" opacity=".8"/><rect x="15.2" y="3" width=".8" height="4" fill="#1b0f7a" opacity=".8"/><rect x="0" y="7" width=".8" height="4" fill="#7a1018" opacity=".8"/><rect x="15.2" y="7" width=".8" height="4" fill="#7a1018" opacity=".8"/></svg></span><span class="pr" style="top:15px">€1 306</span><span class="lf" style="top:31px">Осталось всего 2 номера</span></div>
<div class="rc" style="height:188px"><div class="old" style="top:73px">€1 306</div><div class="big" style="top:88px">€844</div><div class="btn" style="top:129px">Забронировать</div></div>
</div>
<div class="all" style="top:355px"><a>Все номера</a></div>
<div class="last" style="top:355px">Последнее бронирование: <span>июня 05</span></div>
</div>
<div class="card" style="top:622px;height:380px">
<div class="panel"></div>
<div class="img" style="left:16px;top:21px;width:134px;height:134px"><svg width="134" height="134" viewBox="0 0 134 134"><defs><filter id="g30" x="-5%" y="-5%" width="110%" height="110%"><feGaussianBlur stdDeviation="0.45"/></filter></defs><g filter="url(#g30)"><defs><linearGradient id="g29" x1="0" y1="0" x2="0" y2="1"><stop offset="0" stop-color="#27477a"/><stop offset="1" stop-color="#3b5d96"/></linearGradient></defs><rect x="0" y="0" width="134" height="134" fill="#d3b790"/><rect x="0" y="0" width="134" height="13" fill="url(#g29)"/><rect x="2" y="10.5" width="5" height="6" fill="#cbb08c"/><ellipse cx="4.5" cy="10.5" rx="2.2" ry="1.8" fill="#a9b3c1"/><rect x="19" y="10.5" width="5" height="6" fill="#cbb08c"/><ellipse cx="21.5" cy="10.5" rx="2.2" ry="1.8" fill="#a9b3c1"/><rect x="36" y="10.5" width="5" height="6" fill="#cbb08c"/><ellipse cx="38.5" cy="10.5" rx="2.2" ry="1.8" fill="#a9b3c1"/><rect x="51" y="10.5" width="5" height="6" fill="#cbb08c"/><ellipse cx="53.5" cy="10.5" rx="2.2" ry="1.8" fill="#a9b3c1"/><rect x="73" y="10.5" width="5" height="6" fill="#cbb08c"/><ellipse cx="75.5" cy="10.5" rx="2.2" ry="1.8" fill="#a9b3c1"/><rect x="88" y="10.5" width="5" height="6" fill="#cbb08c"/><ellipse cx="90.5" cy="10.5" rx="2.2" ry="1.8" fill="#a9b3c1"/><rect x="106" y="10.5" width="5" height="6" fill="#cbb08c"/><ellipse cx="108.5" cy="10.5" rx="2.2" ry="1.8" fill="#a9b3c1"/><rect x="123" y="10.5" width="5" height="6" fill="#cbb08c"/><ellipse cx="125.5" cy="10.5" rx="2.2" ry="1.8" fill="#a9b3c1"/><rect x="0" y="15" width="134" height="5" fill="#d9bf98"/><rect x="0" y="20" width="134" height="4" fill="#5f4f3b"/><rect x="0" y="24" width="134" height="2" fill="#b99c72"/><rect x="7.5" y="32" width="5" height="5.5" fill="#6f5f4c"/><rect x="7" y="43" width="6" height="9" fill="#8f7d67"/><rect x="7.5" y="61" width="5" height="7" fill="#9a8770"/><rect x="6.5" y="76" width="7" height="11" fill="#857460"/><rect x="7" y="96" width="6" height="9" fill="#65574a"/><rect x="27.5" y="32" width="5" height="5.5" fill="#6f5f4c"/><rect x="27" y="43" width="6" height="9" fill="#8f7d67"/><rect x="27.5" y="61" width="5" height="7" fill="#9a8770"/><rect x="26.5" y="76" width="7" height="11" fill="#857460"/><rect x="27" y="96" width="6" height="9" fill="#65574a"/><rect x="43.5" y="32" width="5" height="5.5" fill="#6f5f4c"/><rect x="43" y="43" width="6" height="9" fill="#8f7d67"/><rect x="43.5" y="61" width="5" height="7" fill="#9a8770"/><rect x="42.5" y="76" width="7" height="11" fill="#857460"/><rect x="43" y="96" width="6" height="9" fill="#65574a"/><rect x="63.5" y="32" width="5" height="5.5" fill="#6f5f4c"/><rect x="63" y="43" width="6" height="9" fill="#8f7d67"/><rect x="63.5" y="61" width="5" height="7" fill="#9a8770"/><rect x="62.5" y="76" width="7" height="11" fill="#857460"/><rect x="63" y="96" width="6" height="9" fill="#65574a"/><rect x="82.5" y="32" width="5" height="5.5" fill="#6f5f4c"/><rect x="82" y="43" width="6" height="9" fill="#8f7d67"/><rect x="82.5" y="61" width="5" height="7" fill="#9a8770"/><rect x="81.5" y="76" width="7" height="11" fill="#857460"/><rect x="82" y="96" width="6" height="9" fill="#65574a"/><rect x="98.5" y="32" width="5" height="5.5" fill="#6f5f4c"/><rect x="98" y="43" width="6" height="9" fill="#8f7d67"/><rect x="98.5" y="61" width="5" height="7" fill="#9a8770"/><rect x="97.5" y="76" width="7" height="11" fill="#857460"/><rect x="98" y="96" width="6" height="9" fill="#65574a"/><rect x="118.5" y="32" width="5" height="5.5" fill="#6f5f4c"/><rect x="118" y="43" width="6" height="9" fill="#8f7d67"/><rect x="118.5" y="61" width="5" height="7" fill="#9a8770"/><rect x="117.5" y="76" width="7" height="11" fill="#857460"/><rect x="118" y="96" width="6" height="9" fill="#65574a"/><rect x="0" y="39" width="134" height="2" fill="#c2a67e"/><rect x="0" y="55" width="134" height="4.5" fill="#a88d68"/><rect x="36" y="55.5" width="62" height="3.5" fill="#8f7858"/><rect x="0" y="70" width="134" height="2.5" fill="#bfa27a"/><rect x="0" y="89" width="134" height="4" fill="#ae926a"/><rect x="0" y="50" width="15" height="5" fill="#857258"/><rect x="57" y="51" width="18" height="4" fill="#857258"/><rect x="116" y="50" width="18" height="5" fill="#857258"/><rect x="0" y="86" width="14" height="5" fill="#88745a"/><rect x="52" y="86" width="26" height="5" fill="#88745a"/><rect x="118" y="86" width="16" height="5" fill="#88745a"/><rect x="101" y="61" width="5" height="8" fill="#332a22"/><rect x="0" y="107" width="134" height="21" fill="#a1886a"/><rect x="0" y="110" width="12" height="17" fill="#27221e"/><rect x="19" y="110" width="11" height="17" fill="#27221e"/><rect x="38" y="110" width="11" height="17" fill="#27221e"/><rect x="82" y="110" width="12" height="17" fill="#27221e"/><rect x="101" y="110" width="10" height="17" fill="#27221e"/><rect x="120" y="110" width="14" height="17" fill="#27221e"/><rect x="3" y="113" width="7" height="9" fill="#8c9c92"/><rect x="41" y="113" width="6" height="10" fill="#b2baaa"/><rect x="84" y="113" width="8" height="9" fill="#9ca89c"/><rect x="123" y="113" width="8" height="9" fill="#aab6aa"/><rect x="0" y="108.5" width="134" height="1.5" fill="#d8cfbe"/><path d="M58.5 127V105a7.5 8.5 0 0 1 15 0V127z" fill="#4a4237"/><rect x="62" y="114" width="8" height="13" fill="#27231e"/><rect x="0" y="127" width="134" height="7" fill="#2a2a2e"/><polygon points="0,126 8,122 34,122 44,127 44,134 0,134" fill="#3c4a5a"/><rect x="80" y="126" width="54" height="2" fill="#67615a"/></g></svg></div>
<div class="title"><a>Cristoforo Colombo Hotel Rome</a><span class="stars"><svg width="14" height="14" viewBox="0 0 24 24"><polygon fill="#fab818" stroke="#fab818" stroke-width="1.2" stroke-linejoin="round" points="12.0,1.2 15.5,7.9 23.0,9.2 17.7,14.7 18.8,22.2 12.0,18.8 5.2,22.2 6.3,14.7 1.0,9.2 8.5,7.9"/></svg><svg width="14" height="14" viewBox="0 0 24 24"><polygon fill="#fab818" stroke="#fab818" stroke-width="1.2" stroke-linejoin="round" points="12.0,1.2 15.5,7.9 23.0,9.2 17.7,14.7 18.8,22.2 12.0,18.8 5.2,22.2 6.3,14.7 1.0,9.2 8.5,7.9"/></svg><svg width="14" height="14" viewBox="0 0 24 24"><polygon fill="#fab818" stroke="#fab818" stroke-width="1.2" stroke-linejoin="round" points="12.0,1.2 15.5,7.9 23.0,9.2 17.7,14.7 18.8,22.2 12.0,18.8 5.2,22.2 6.3,14.7 1.0,9.2 8.5,7.9"/></svg><svg width="14" height="14" viewBox="0 0 24 24"><polygon fill="#fab818" stroke="#fab818" stroke-width="1.2" stroke-linejoin="round" points="12.0,1.2 15.5,7.9 23.0,9.2 17.7,14.7 18.8,22.2 12.0,18.8 5.2,22.2 6.3,14.7 1.0,9.2 8.5,7.9"/></svg></span></div>
<div class="sub"><a>Отель Кристофоро Коломбо Рим</a></div>
<div class="loc">Рим, Италия <a>Показать карту</a></div>
<div class="q">"Просторная автостоянка",  "Отличный бассейн",  "Хороший отдых"</div>
<div class="rate">Хорошо, 7,6</div>
<div class="rev">Оценка по <b>336</b> отзывам</div>
<div class="tbl" style="height:215px">
<div class="th">Итого за 7 ночей</div>
<div class="tr" style="top:25px;height:33px"><a style="top:2px">Triple Room</a><span class="l2" style="top:15px"><span class="g">&nbsp;БЕСПЛАТНАЯ отмена бронирования, Завтрак включён</span><span class="pv">Hotels.com</span><svg class="fl" viewBox="0 0 16 11"><rect width="16" height="3" fill="#fbfbfe"/><rect y="0" width="16" height=".7" fill="#e2e3ee"/><rect y="3" width="16" height="2" fill="#3a3ed4"/><rect y="5" width="16" height="2" fill="#5b3ec4"/><rect y="7" width="16" height="1.5" fill="#d23650"/><rect y="8.5" width="16" height="1.7" fill="#f04a4a"/><rect y="10.2" width="16" height=".8" fill="#8c1616"/><rect x="0" y="3" width=".8" height="4" fill="#1b0f7a" opacity=".8"/><rect x="15.2" y="3" width=".8" height="4" fill="#1b0f7a" opacity=".8"/><rect x="0" y="7" width=".8" height="4" fill="#7a1018" opacity=".8"/><rect x="15.2" y="7" width=".8" height="4" fill="#7a1018" opacity=".8"/></svg></span><span class="pr" style="top:8px">€770</span></div>
<div class="rc" style="height:188px"></div>
</div>
</div>
<div class="red" style="left:10px;top:-2px;width:274px;height:51px"></div>
<div class="red" style="left:8px;top:53px;width:275px;height:48px"></div>
<div class="red" style="left:10px;top:537px;width:272px;height:50px"></div>
</body></html>
